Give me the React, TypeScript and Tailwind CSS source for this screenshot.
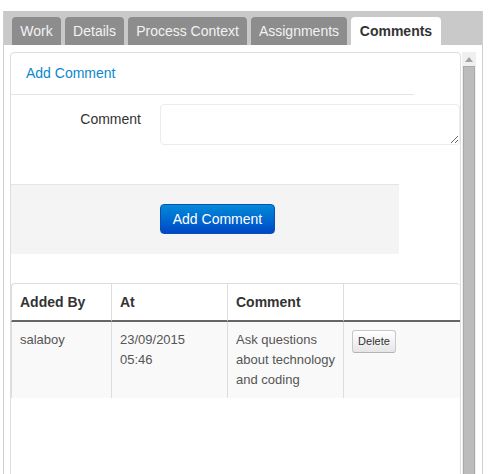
import React from "react";

const tabs = [
  { label: "Work", width: "w-[49px]" },
  { label: "Details", width: "w-[59px]" },
  { label: "Process Context", width: "w-[119px]" },
  { label: "Assignments", width: "w-[96px]" },
];

const Tab = ({ label, width }: { label: string; width: string }) => (
  <div
    className={`${width} flex h-[28px] items-center justify-center rounded-t-[4px] bg-[#8d8d8d] text-[14px] text-[#f2f2f2]`}
  >
    {label}
  </div>
);

const FakeScrollbar = () => (
  <div className="ml-[1px] flex w-[14px] flex-col bg-[#f0f0f0]">
    <div className="flex h-[14px] items-center justify-center pt-[1px]">
      <svg width="8" height="5" viewBox="0 0 8 5">
        <path d="M0 5 L4 0 L8 5 Z" fill="#a3a3a3" />
      </svg>
    </div>
    <div className="mx-[1px] flex-1 border border-[#a9a9a9] bg-[#bcbcbc]" />
  </div>
);

export default function App() {
  return (
    <div className="h-[474px] w-[490px] overflow-hidden bg-white font-['Liberation_Sans',Arial,sans-serif] text-[#333]">
      <div className="ml-[3px] mt-[11px] h-[600px] w-[480px] border-x border-[#cfcfcf]">
        {/* tab strip */}
        <div className="flex h-[34px] items-end gap-[4px] bg-[#c9c9c9] pl-[8px]">
          {tabs.map((t) => (
            <Tab key={t.label} label={t.label} width={t.width} />
          ))}
          <div className="flex h-[28px] w-[90px] items-center justify-center rounded-t-[4px] bg-white text-[14px] font-bold text-[#333]">
            Comments
          </div>
        </div>

        <div className="flex h-[560px] pl-[6px] pt-[7px]">
          <div className="w-[451px] rounded-[4px] border border-[#dedede] bg-white">
            <div className="h-[42px] w-[403px] border-b border-[#e5e5e5] pl-[15px] pt-[10px] text-[14px] leading-[20px] text-[#0a88cc]">
              Add Comment
            </div>

            <div className="flex pt-[9px]">
              <label className="w-[130px] pt-[5px] text-right text-[14px] leading-[20px] text-[#333]">
                Comment
              </label>
              <textarea className="ml-[19px] h-[41px] w-[300px] rounded-[4px] border border-[#ececec] bg-white outline-none" />
            </div>

            <div className="mt-[39px] h-[70px] w-[388px] border-t border-[#e5e5e5] bg-[#f4f4f4] pl-[149px] pt-[19px]">
              <button
                type="button"
                className="h-[30px] w-[115px] rounded-[4px] border border-[#0a4fb3] bg-gradient-to-b from-[#0a8ad8] to-[#0046c8] text-[14px] text-white"
              >
                Add Comment
              </button>
            </div>

            <table className="mt-[29px] w-[449px] table-fixed border-separate border-spacing-0 text-left">
              <thead>
                <tr>
                  <th className="w-[100px] rounded-tl-[4px] border-t border-l border-b-2 border-[#ddd] border-b-[#666] px-[8px] py-[8px] text-[14px] font-bold leading-[20px] text-[#333]">
                    Added By
                  </th>
                  <th className="w-[116px] border-t border-l border-b-2 border-[#ddd] border-b-[#666] px-[8px] py-[8px] text-[14px] font-bold leading-[20px] text-[#333]">
                    At
                  </th>
                  <th className="w-[116px] border-t border-l border-b-2 border-[#ddd] border-b-[#666] px-[8px] py-[8px] text-[14px] font-bold leading-[20px] text-[#333]">
                    Comment
                  </th>
                  <th className="rounded-tr-[4px] border-t border-l border-b-2 border-[#ddd] border-b-[#666] px-[8px] py-[8px]" />
                </tr>
              </thead>
              <tbody>
                <tr className="bg-[#f9f9f9] align-top text-[13px] leading-[20px] text-[#555]">
                  <td className="border-l border-[#ddd] px-[8px] py-[8px]">salaboy</td>
                  <td className="border-l border-[#ddd] px-[8px] py-[8px]">
                    23/09/2015
                    <br />
                    05:46
                  </td>
                  <td className="whitespace-nowrap border-l border-[#ddd] py-[8px] pl-[8px] pr-0">
                    Ask questions
                    <br />
                    about technology
                    <br />
                    and coding
                  </td>
                  <td className="border-l border-[#ddd] px-[8px] py-[8px]">
                    <button
                      type="button"
                      className="h-[23px] w-[44px] rounded-[3px] border border-[#c8c8c8] border-b-[#b3b3b3] bg-gradient-to-b from-white to-[#e6e6e6] text-[11px] leading-none text-[#333]"
                    >
                      Delete
                    </button>
                  </td>
                </tr>
              </tbody>
            </table>
          </div>
          <FakeScrollbar />
        </div>
      </div>
    </div>
  );
}
